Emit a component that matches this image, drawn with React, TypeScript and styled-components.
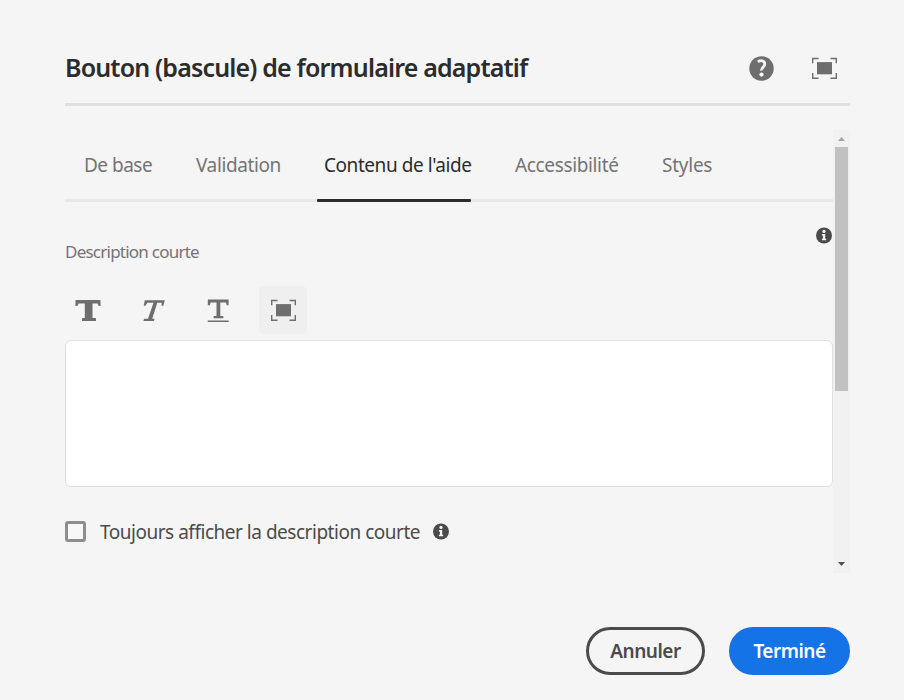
import React from "react";
import styled, { createGlobalStyle } from "styled-components";

const GlobalStyle = createGlobalStyle`
  * { box-sizing: border-box; }
  body {
    margin: 0;
    background: #f5f5f5;
    font-family: "Noto Sans", "Open Sans", sans-serif;
    overflow: hidden;
  }
  button { font: inherit; margin: 0; padding: 0; border: 0; background: none; color: inherit; }
`;

const Dialog = styled.main`
  width: 904px;
  height: 700px;
  padding: 0 54px 0 65px;
  display: flex;
  flex-direction: column;
`;

const Header = styled.header`
  height: 106px;
  padding: 33px 13px 0 0;
  border-bottom: 3px solid #e0e0e0;
  display: flex;
  align-items: center;
  flex: none;
`;

const Title = styled.h1`
  margin: -2px 0 0;
  flex: 1;
  font-size: 25px;
  line-height: 34px;
  font-weight: 600;
  letter-spacing: -0.83px;
  color: #2c2c2c;
  white-space: nowrap;
`;

const HeaderActions = styled.div`
  display: flex;
  align-items: center;
  gap: 37px;
  color: #6e6e6e;
  button, svg { display: block; }
`;

const Body = styled.div`
  display: flex;
  height: 443px;
  margin-top: 24px;
  flex: none;
`;

const Content = styled.div`
  width: 768px;
  flex: none;
`;

const Tabs = styled.nav`
  height: 72px;
  padding-left: 12px;
  border-bottom: 3px solid #e8e8e8;
  display: flex;
`;

const Tab = styled.button<{ $width: number; $spacing: number; $active?: boolean }>`
  width: ${(p) => p.$width}px;
  height: 72px;
  flex: none;
  padding: 0 0 1px 7px;
  text-align: left;
  font-size: 19px;
  letter-spacing: ${(p) => p.$spacing}px;
  white-space: nowrap;
  color: ${(p) => (p.$active ? "#2c2c2c" : "#747474")};
  display: flex;
  flex-direction: column;
  justify-content: space-between;
  &::after {
    content: "";
    width: 154px;
    height: 3px;
    margin: 0 0 -1px -7px;
    border-radius: 1px;
    background: ${(p) => (p.$active ? "#2c2c2c" : "transparent")};
  }
  span { line-height: 26px; padding-top: 22px; }
`;

const FieldHead = styled.div`
  height: 84px;
  padding: 25px 1px 0 0;
  display: flex;
  justify-content: space-between;
  align-items: flex-start;
`;

const Label = styled.label`
  margin-top: 13px;
  font-size: 17px;
  line-height: 24px;
  letter-spacing: -0.76px;
  color: #747474;
`;

const Toolbar = styled.div`
  height: 48px;
  margin-left: -1px;
  display: flex;
  gap: 17px;
`;

const Tool = styled.button<{ $on?: boolean }>`
  width: 48px;
  height: 48px;
  border-radius: 5px;
  display: flex;
  align-items: center;
  justify-content: center;
  color: #6e6e6e;
  background: ${(p) => (p.$on ? "#efefef" : "transparent")};
  svg { display: block; }
`;

const Editor = styled.div`
  height: 147px;
  margin-top: 6px;
  background: #fff;
  border: 1px solid #dfdfdf;
  border-radius: 6px;
`;

const CheckRow = styled.div`
  margin-top: 34px;
  display: flex;
  align-items: center;
  height: 21px;
`;

const CheckBox = styled.span`
  width: 21px;
  height: 21px;
  border: 3px solid #8e8e8e;
  border-radius: 3px;
  background: #f8f8f8;
`;

const CheckText = styled.span`
  width: 333px;
  margin-left: 14px;
  font-size: 19px;
  line-height: 26px;
  letter-spacing: -0.48px;
  color: #4b4b4b;
  white-space: nowrap;
`;

const ScrollTrack = styled.div`
  width: 17px;
  background: #f1f1f1;
  display: flex;
  flex-direction: column;
  align-items: center;
  svg { display: block; flex: none; }
`;

const ScrollThumb = styled.div`
  width: 13px;
  height: 244px;
  background: #c1c1c1;
  margin-bottom: auto;
`;

const Footer = styled.footer`
  margin-top: 54px;
  display: flex;
  justify-content: flex-end;
  gap: 24px;
`;

const Action = styled.button<{ $width: number; $primary?: boolean }>`
  width: ${(p) => p.$width}px;
  height: 48px;
  border-radius: 24px;
  border: 3px solid ${(p) => (p.$primary ? "#1473e6" : "#4b4b4b")};
  background: ${(p) => (p.$primary ? "#1473e6" : "transparent")};
  color: ${(p) => (p.$primary ? "#fff" : "#4b4b4b")};
  font-size: 19px;
  line-height: 26px;
  font-weight: 600;
  letter-spacing: -0.5px;
`;

const HelpIcon = () => (
  <svg width="26" height="26" viewBox="0.5 -0.5 26 26">
    <circle cx="13" cy="13" r="12.2" fill="currentColor" />
    <path d="M9.3 6.3C12.3 4.2 16.3 5 16.3 8.5c0 3.1-3.6 3.4-3.3 6.5" fill="none" stroke="#f5f5f5" strokeWidth="2.8" />
    <circle cx="13" cy="19.1" r="2.1" fill="#f5f5f5" />
  </svg>
);

const FullscreenIcon = () => (
  <svg width="25" height="22" viewBox="0 -0.6 25 22">
    <path d="M.7 5.7V.9h5.8M18.5.9h5.8v4.8M24.3 15.3v5.4h-5.8M6.5 20.7H.7v-5.4" fill="none" stroke="currentColor" strokeWidth="1.4" />
    <path d="M5 4.5h15v12.2H5z" fill="currentColor" />
  </svg>
);

const InfoIcon = () => (
  <svg width="16" height="17" viewBox="0 0 16 17">
    <circle cx="8" cy="8.5" r="8" fill="#4b4b4b" />
    <circle cx="8" cy="4.4" r="1.6" fill="#f5f5f5" />
    <path d="M5.9 7h3.3v4.7h1v1.5H5.9v-1.5h1V8.5h-1z" fill="#f5f5f5" />
  </svg>
);

const BoldIcon = () => (
  <svg width="26" height="22" viewBox="0 -0.5 26 22">
    <path d="M1 .5h24q.5 0 .5.5v5.5h-2L22.8 4h-5.3v14.6h2.8q.7 0 .7.7v1.9q0 .3-.5.3h-13q-.5 0-.5-.5v-1.7q0-.7.7-.7h2.1V4H3.5l-1 2.5h-2V1q0-.5.5-.5z" fill="currentColor" />
  </svg>
);

const ItalicIcon = () => (
  <svg width="24" height="22" viewBox="0 -0.3 24 22">
    <path d="M3.8 .9h20L22.3 6.4h-1.8l.2-3h-4.4L11.2 19.4h2.4l-.7 2.2H2.4l.7-2.2h3.9L12.5 3.4H6.4L4.4 6.4H2.7z" fill="currentColor" />
  </svg>
);

const UnderlineIcon = () => (
  <svg width="22" height="24" viewBox="0 -1 22 24">
    <path d="M1.3 .5h19.8q.5 0 .5.5v5.2h-1.9l-.7-2.7h-5.7v13.6h2.5q.6 0 .6.6v1q0 .6-.6.6H7.2q-.6 0-.6-.6v-1q0-.6.6-.6h2.3V3.5H3.6l-.7 2.7H.8V1q0-.5.5-.5zM.7 21.5h21v1.4H.7z" fill="currentColor" />
  </svg>
);

const tabs = [
  { name: "De base", width: 112, spacing: -0.5 },
  { name: "Validation", width: 128, spacing: -0.4 },
  { name: "Contenu de l'aide", width: 191, spacing: -0.44, active: true },
  { name: "Accessibilité", width: 147, spacing: -0.36 },
  { name: "Styles", width: 70, spacing: -0.25 },
];

export default function App() {
  return (
    <>
      <GlobalStyle />
      <Dialog>
        <Header>
          <Title>Bouton (bascule) de formulaire adaptatif</Title>
          <HeaderActions>
            <button aria-label="Aide"><HelpIcon /></button>
            <button aria-label="Plein écran"><FullscreenIcon /></button>
          </HeaderActions>
        </Header>
        <Body>
          <Content>
            <Tabs>
              {tabs.map((t) => (
                <Tab key={t.name} $width={t.width} $spacing={t.spacing} $active={t.active}>
                  <span>{t.name}</span>
                </Tab>
              ))}
            </Tabs>
            <FieldHead>
              <Label>Description courte</Label>
              <InfoIcon />
            </FieldHead>
            <Toolbar>
              <Tool aria-label="Gras"><BoldIcon /></Tool>
              <Tool aria-label="Italique"><ItalicIcon /></Tool>
              <Tool aria-label="Souligné"><UnderlineIcon /></Tool>
              <Tool aria-label="Plein écran" $on><FullscreenIcon /></Tool>
            </Toolbar>
            <Editor />
            <CheckRow>
              <CheckBox />
              <CheckText>Toujours afficher la description courte</CheckText>
              <InfoIcon />
            </CheckRow>
          </Content>
          <ScrollTrack>
            <svg width="17" height="17" viewBox="0 0 17 17"><path d="M5 11l3.5-4L12 11z" fill="#a3a3a3" /></svg>
            <ScrollThumb />
            <svg width="17" height="17" viewBox="0 0 17 17"><path d="M5 6h7l-3.5 4z" fill="#505050" /></svg>
          </ScrollTrack>
        </Body>
        <Footer>
          <Action $width={119}>Annuler</Action>
          <Action $width={121} $primary>Terminé</Action>
        </Footer>
      </Dialog>
    </>
  );
}
